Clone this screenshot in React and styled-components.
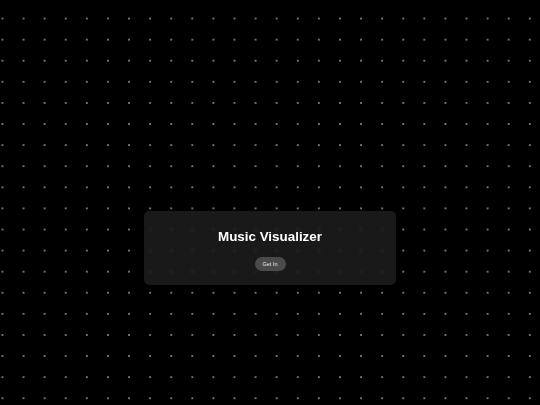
import React from "react";
import styled, { createGlobalStyle } from "styled-components";

const GlobalStyle = createGlobalStyle`
  html, body {
    margin: 0;
    padding: 0;
    background: #000;
  }
  body {
    font-family: "Liberation Sans", Arial, sans-serif;
  }
`;

// Dotted canvas behind everything
const Page = styled.div`
  width: 540px;
  height: 405px;
  box-sizing: border-box;
  padding-top: 211px;
  display: flex;
  justify-content: center;
  align-items: flex-start;
  background-color: #000;
  background-image: radial-gradient(
    circle at 1px 1px,
    rgba(255, 255, 255, 0.45) 0.8px,
    transparent 1.2px
  );
  background-size: 21.1px 21.1px;
  background-position: 1.5px 17.6px;
  overflow: hidden;
`;

const Card = styled.div`
  width: 252px;
  height: 74px;
  box-sizing: border-box;
  padding: 17.5px 0 14px;
  display: flex;
  flex-direction: column;
  align-items: center;
  gap: 12px;
  background: rgba(34, 34, 34, 0.72);
  backdrop-filter: blur(1.8px);
  border-radius: 5px;
`;

const Title = styled.h1`
  margin: 0;
  font-size: 13.4px;
  line-height: 16px;
  font-weight: 700;
  color: #fff;
`;

const Button = styled.button`
  width: 31px;
  height: 14.5px;
  padding: 0;
  border: none;
  border-radius: 8px;
  background: #4a4a4a;
  color: #e6e6e6;
  font-family: "Liberation Sans", Arial, sans-serif;
  font-size: 5.5px;
  cursor: pointer;
`;

const App = () => (
  <>
    <GlobalStyle />
    <Page>
      <Card>
        <Title>Music Visualizer</Title>
        <Button>Get In</Button>
      </Card>
    </Page>
  </>
);

export default App;
